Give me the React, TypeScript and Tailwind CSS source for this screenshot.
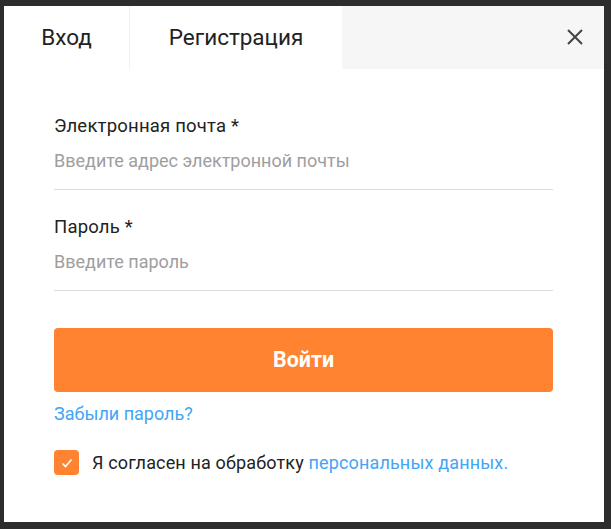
import React from "react";

export default function App() {
  return (
    <div
      className="h-[529px] w-[611px] bg-[#2d2d2d] pt-[6px] pl-[4px] overflow-hidden"
      style={{ fontFamily: "Roboto, 'Noto Sans', sans-serif" }}
    >
      <div className="w-[600px] h-[516px] bg-white flex flex-col">
        <div className="flex h-[63px]">
          <div className="w-[126px] flex items-center justify-center border-r border-[#f0f0f0] text-[22.5px] text-[#222]">
            Вход
          </div>
          <div className="w-[212px] flex items-center justify-center text-[22.5px] text-[#222]">
            Регистрация
          </div>
          <div className="flex-1 bg-[#f6f6f6] flex items-center justify-end pr-[20px]">
            <svg width="18" height="18" viewBox="0 0 18 18" className="mb-[1px]">
              <path d="M2 2 L16 16 M16 2 L2 16" stroke="#444" strokeWidth="2" />
            </svg>
          </div>
        </div>
        <div className="flex flex-col pl-[50px] pr-[51px] pt-[45px]">
          <div className="text-[18.5px] leading-[24px] text-[#222] tracking-[0.2px]">Электронная почта *</div>
          <div className="pt-[11px] pb-[16px] border-b border-[#dcdcdc] text-[18px] leading-[24px] text-[#9e9e9e]">
            Введите адрес электронной почты
          </div>
          <div className="mt-[25px] text-[18.5px] leading-[24px] text-[#222] tracking-[0.2px]">Пароль *</div>
          <div className="pt-[11px] pb-[16px] border-b border-[#dcdcdc] text-[18px] leading-[24px] text-[#9e9e9e]">
            Введите пароль
          </div>
          <button className="mt-[37px] h-[64px] rounded-[4px] bg-[#ff8330] text-white text-[21.5px] font-bold">
            Войти
          </button>
          <div className="mt-[10px] text-[18px] leading-[24px] text-[#42a5f5]">Забыли пароль?</div>
          <div className="mt-[24px] flex items-center gap-[13px]">
            <div className="w-[25px] h-[25px] rounded-[4px] bg-[#ff8330] flex items-center justify-center">
              <svg width="12" height="10" viewBox="0 0 12 10">
                <path d="M1.5 5.5 L4.5 8.5 L10.5 1.5" stroke="white" strokeWidth="1.6" fill="none" />
              </svg>
            </div>
            <div className="text-[18px] leading-[24px] text-[#222] tracking-[0.15px]">
              Я согласен на обработку <span className="text-[#42a5f5]">персональных данных.</span>
            </div>
          </div>
        </div>
      </div>
    </div>
  );
}
